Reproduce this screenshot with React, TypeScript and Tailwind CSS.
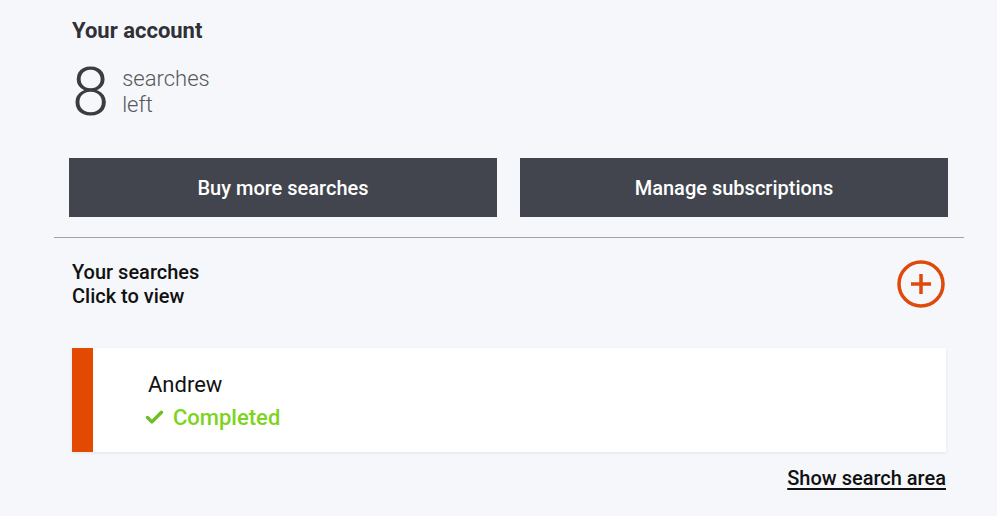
import { Check } from 'lucide-react'

function PlusCircle() {
  return (
    <svg width="48" height="48" viewBox="0 0 48 48" fill="none">
      <circle cx="24" cy="24" r="22" stroke="#e0490c" strokeWidth="3.5" />
      <path d="M24 14v20M14 24h20" stroke="#e0490c" strokeWidth="3.5" />
    </svg>
  )
}

export default function App() {
  return (
    <div className="min-h-screen w-full bg-[#f6f7fb] font-['Roboto',sans-serif]">
      <div className="ml-[54px] w-[910px]">
        <section className="pt-[17px] pb-5">
          <h2 className="pl-[18px] text-[22px] font-bold leading-[28px] text-[#2f3136]">Your account</h2>
          <div className="mt-[19px] flex items-center pl-[18px]">
            <span className="text-[67px] font-light leading-[56px] text-[#3a3c41]">8</span>
            <div className="ml-[13px] flex flex-col text-[22px] font-light leading-[26px] text-[#55575c]">
              <span>searches</span>
              <span>left</span>
            </div>
          </div>
          <div className="mt-[38px] grid grid-cols-2 gap-[23px] pl-[15px] pr-[16px]">
            <button className="h-[59px] bg-[#42454d] text-[20px] font-medium text-white">Buy more searches</button>
            <button className="h-[59px] bg-[#42454d] text-[20px] font-medium text-white">Manage subscriptions</button>
          </div>
        </section>
        <div className="h-px bg-[#a2a3a8]" />
        <section className="pl-[18px] pr-[18px] pt-[22px]">
          <div className="flex items-center justify-between">
            <div className="text-[20px] font-medium leading-6 text-[#111]">
              <div>Your searches</div>
              <div>Click to view</div>
            </div>
            <div className="mr-[1px]">
              <PlusCircle />
            </div>
          </div>
          <div className="mt-[40px] flex h-[104px] bg-white shadow-[0_1px_3px_rgba(0,0,0,0.08)]">
            <div className="w-[21px] bg-[#e24a03]" />
            <div className="flex flex-col justify-center pl-[55px] pt-[2px]">
              <div className="text-[22px] leading-[33px] text-[#111]">Andrew</div>
              <div className="flex items-center gap-[8px] text-[22px] font-medium leading-[33px] text-[#7ed321]">
                <Check size={21} strokeWidth={4} className="-ml-[4px] text-[#6cc024]" />
                <span>Completed</span>
              </div>
            </div>
          </div>
          <div className="mt-[11px] flex justify-end">
            <a className="text-[20px] font-medium text-[#111] underline underline-offset-[3px]">Show search area</a>
          </div>
        </section>
      </div>
    </div>
  )
}
